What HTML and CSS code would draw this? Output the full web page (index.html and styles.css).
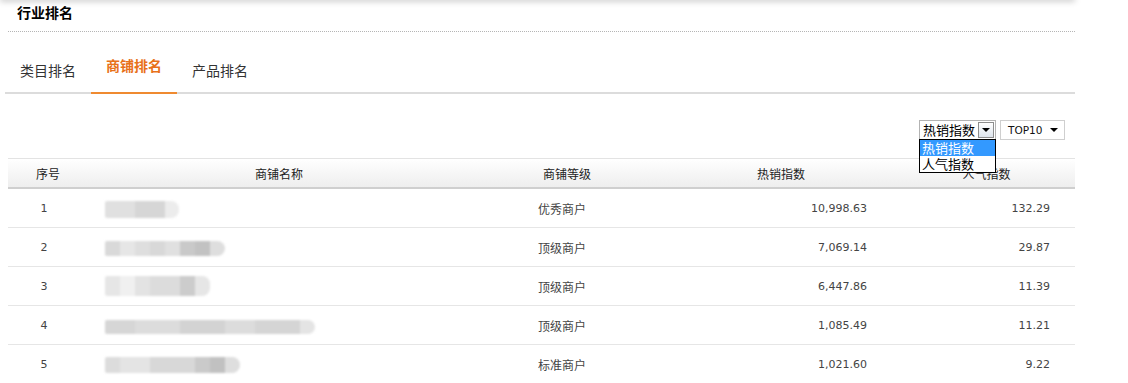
FILE: index.html
```html
<!DOCTYPE html>
<html lang="zh">
<head>
<meta charset="utf-8">
<title>行业排名</title>
<link rel="stylesheet" href="styles.css">
</head>
<body>
<div class="topshadow"></div>
<div class="page">
  <h2 class="title">行业排名</h2>
  <ul class="tabs">
    <li class="tab">类目排名</li>
    <li class="tab active">商铺排名</li>
    <li class="tab">产品排名</li>
  </ul>
  <div class="toolbar">
    <div class="select sel-index">
      <span class="sel-text">热销指数</span>
      <span class="sel-btn"><span class="tri"></span></span>
      <ul class="dropdown">
        <li class="opt hl">热销指数</li>
        <li class="opt">人气指数</li>
      </ul>
    </div>
    <div class="select sel-top">
      <span class="sel-text num">TOP10</span>
      <span class="tri"></span>
    </div>
  </div>
  <table class="rank">
    <thead>
      <tr>
        <th class="c1">序号</th>
        <th class="c2">商铺名称</th>
        <th class="c3">商铺等级</th>
        <th class="c4">热销指数</th>
        <th class="c5">人气指数</th>
      </tr>
    </thead>
    <tbody>
      <tr>
        <td class="c1 num">1</td>
        <td class="c2"><span class="blur b1"></span></td>
        <td class="c3">优秀商户</td>
        <td class="c4 num">10,998.63</td>
        <td class="c5 num">132.29</td>
      </tr>
      <tr>
        <td class="c1 num">2</td>
        <td class="c2"><span class="blur b2"></span></td>
        <td class="c3">顶级商户</td>
        <td class="c4 num">7,069.14</td>
        <td class="c5 num">29.87</td>
      </tr>
      <tr>
        <td class="c1 num">3</td>
        <td class="c2"><span class="blur b3"></span></td>
        <td class="c3">顶级商户</td>
        <td class="c4 num">6,447.86</td>
        <td class="c5 num">11.39</td>
      </tr>
      <tr>
        <td class="c1 num">4</td>
        <td class="c2"><span class="blur b4"></span></td>
        <td class="c3">顶级商户</td>
        <td class="c4 num">1,085.49</td>
        <td class="c5 num">11.21</td>
      </tr>
      <tr>
        <td class="c1 num">5</td>
        <td class="c2"><span class="blur b5"></span></td>
        <td class="c3">标准商户</td>
        <td class="c4 num">1,021.60</td>
        <td class="c5 num">9.22</td>
      </tr>
    </tbody>
  </table>
</div>
</body>
</html>
```
FILE: styles.css
```css
* { box-sizing: border-box; }
html, body { background: #fff; }
body {
  margin: 0;
  font-family: "DejaVu Sans", "Noto Sans CJK SC", sans-serif;
  font-size: 12px;
  color: #333;
  overflow: hidden;
}
.topshadow {
  width: 1075px;
  height: 4px;
  margin-top: -4px;
  box-shadow: 0 1px 6px rgba(0,0,0,0.28);
}
.page {
  width: 1067px;
  margin-left: 8px;
}
.title {
  margin: 0;
  height: 32px;
  padding-left: 9px;
  line-height: 25px;
  font-size: 14px;
  font-weight: bold;
  color: #000;
  font-family: "Noto Sans CJK SC", sans-serif;
  border-bottom: 1px dotted #b5b5b5;
}
.tabs {
  list-style: none;
  margin: 0 0 0 -3px;
  padding: 0;
  display: flex;
  align-items: flex-start;
  border-bottom: 2px solid #dcdcdc;
}
.tab {
  width: 86px;
  height: 62px;
  margin-bottom: -2px;
  padding-top: 28px;
  line-height: 20px;
  text-align: center;
  font-size: 14px;
  color: #333;
  font-family: "Noto Sans CJK SC", sans-serif;
  border-bottom: 2px solid transparent;
}
.tab.active {
  padding-top: 23px;
  color: #e8711a;
  font-weight: bold;
  border-bottom-color: #ef8a30;
}
.toolbar {
  display: flex;
  justify-content: flex-end;
  gap: 4px;
  height: 20px;
  margin: 26px 10px 18px 0;
}
.select {
  position: relative;
  height: 20px;
  border: 1px solid #b3b3b3;
  display: flex;
  align-items: center;
  background: #fff;
  color: #000;
}
.sel-index { width: 77px; padding-left: 3px; }
.sel-index .sel-text { font-size: 13px; flex: 1; line-height: 18px; font-family: "Noto Sans CJK SC", sans-serif; }
.sel-btn {
  width: 16px;
  height: 16px;
  margin-right: 1px;
  border: 1px solid #8d8d8d;
  background: linear-gradient(#ffffff, #dde4ec);
  display: flex;
  align-items: center;
  justify-content: center;
}
.tri {
  width: 0;
  height: 0;
  border-left: 4px solid transparent;
  border-right: 4px solid transparent;
  border-top: 4px solid #000;
}
.sel-top { width: 65px; padding: 0 6px 0 7px; border-color: #cfcfcf; }
.sel-top .sel-text { flex: 1; font-size: 10.5px; color: #111; }
.dropdown {
  position: absolute;
  left: -1px;
  top: 18px;
  width: 77px;
  margin: 0;
  padding: 0;
  list-style: none;
  border: 1px solid #000;
  background: #fff;
  z-index: 5;
}
.opt {
  height: 16px;
  line-height: 16px;
  padding-left: 2px;
  font-size: 13px;
  color: #000;
  font-family: "Noto Sans CJK SC", sans-serif;
}
.opt.hl { background: #3399ff; color: #fff; }
.rank {
  width: 1067px;
  border-collapse: separate;
  border-spacing: 0;
  table-layout: fixed;
}
.rank th {
  height: 31px;
  font-weight: normal;
  font-size: 12px;
  color: #222;
  font-family: "Noto Sans CJK SC", sans-serif;
  text-align: center;
  background: linear-gradient(#ffffff, #eeeeee);
  border-top: 1px solid #e3e3e3;
  border-bottom: 2px solid #cfcfcf;
  padding: 0;
}
.rank td {
  height: 39px;
  padding: 0;
  border-bottom: 1px solid #e6e6e6;
  color: #444;
  font-family: "Noto Sans CJK SC", sans-serif;
}
.rank td.num { font-family: "DejaVu Sans", sans-serif; font-size: 11px; }
.c1 { width: 80px; text-align: center; }
.rank td.c1 { padding-right: 8px; }
.c2 { width: 382px; text-align: center; }
.rank td.c2 { text-align: left; padding-left: 17px; }
.c3 { width: 194px; text-align: center; }
.rank td.c3 { padding-right: 10px; }
.c4 { width: 234px; text-align: center; }
.rank td.c4 { text-align: right; padding-right: 31px; }
.c5 { width: 177px; text-align: center; }
.rank td.c5 { text-align: right; padding-right: 25px; }
.blur {
  display: inline-block;
  vertical-align: middle;
  height: 17px;
  filter: blur(0.8px);
  border-radius: 2px 8px 8px 2px;
}
.b1 {
  width: 74px;
  background: linear-gradient(90deg, #e0e0e0 0 30px, #d6d6d6 30px 60px, #ececec 60px);
}
.b2 {
  width: 120px;
  height: 15px;
  background: linear-gradient(90deg, #d9d9d9 0 15px, #e6e6e6 15px 30px, #dedede 30px 45px, #d8d8d8 45px 60px, #e0e0e0 60px 75px, #c9c9c9 75px 90px, #c2c2c2 90px 105px, #dedede 105px);
}
.b3 {
  width: 105px;
  height: 20px;
  background: linear-gradient(90deg, #e6e6e6 0 15px, #f0f0f0 15px 30px, #e3e3e3 30px 45px, #dcdcdc 45px 75px, #cccccc 75px 90px, #e6e6e6 90px);
}
.b4 {
  width: 210px;
  height: 14px;
  background: linear-gradient(90deg, #d6d6d6 0 30px, #dcdcdc 30px 75px, #d3d3d3 75px 120px, #dcdcdc 120px 150px, #d5d5d5 150px 195px, #e4e4e4 195px);
}
.b5 {
  width: 135px;
  height: 16px;
  background: linear-gradient(90deg, #dcdcdc 0 15px, #e4e4e4 15px 45px, #d8d8d8 45px 90px, #cacaca 90px 105px, #c1c1c1 105px 120px, #dedede 120px);
}
```
